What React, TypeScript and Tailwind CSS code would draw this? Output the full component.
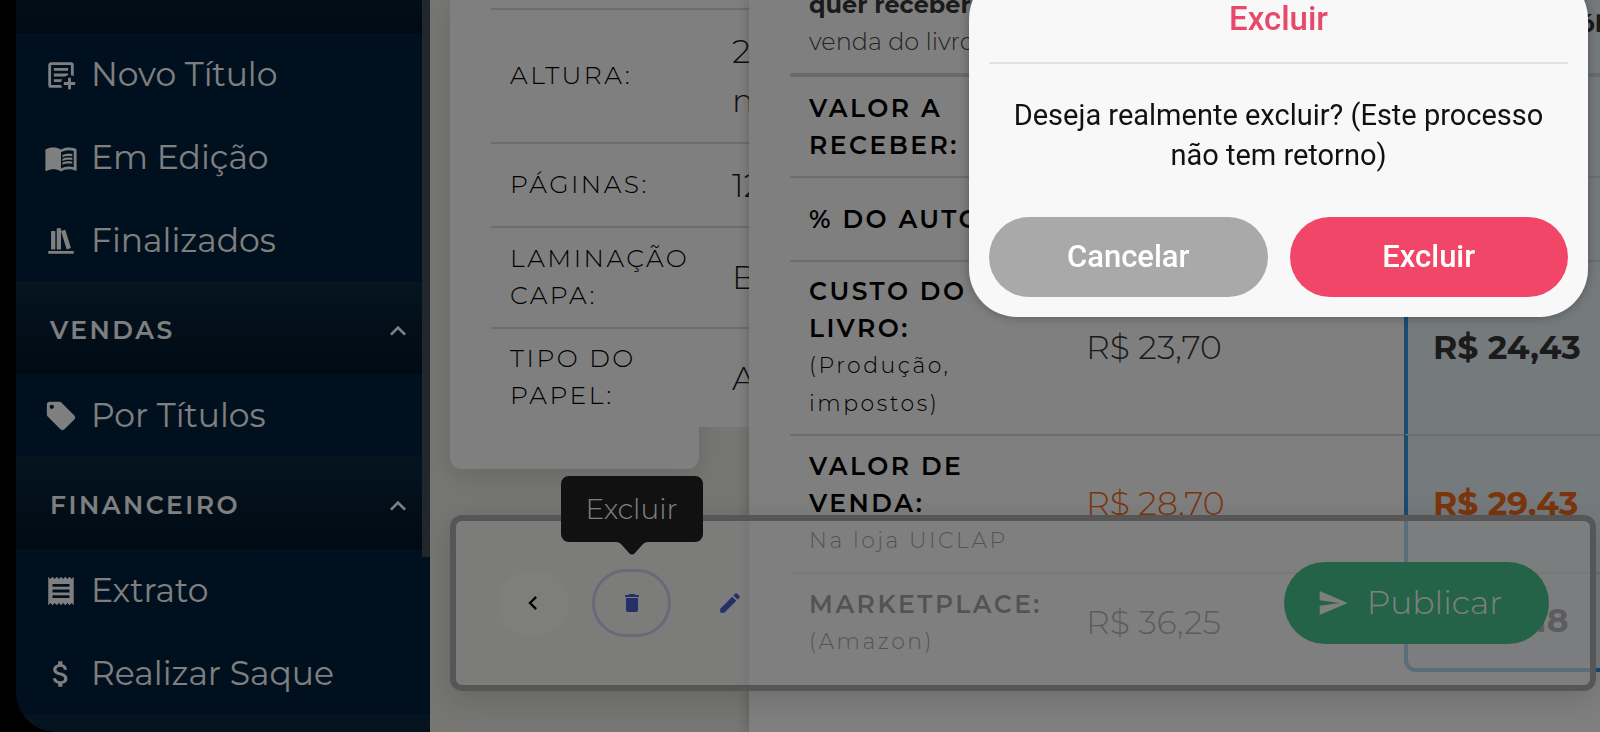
import type { ReactNode } from "react";
import {
  MdAttachMoney,
  MdChevronLeft,
  MdDelete,
  MdEdit,
  MdExpandLess,
  MdLocalOffer,
  MdMenuBook,
  MdReceipt,
  MdSend,
} from "react-icons/md";

function NoteAddIcon() {
  return (
    <svg viewBox="0 0 24 24" className="size-[34px]" fill="currentColor" aria-hidden="true">
      <path d="M17 14h2v3h3v2h-3v3h-2v-3h-3v-2h3v-3M5 3h14a2 2 0 0 1 2 2v7.8a6 6 0 0 0-2-.7V5H5v14h7.1c.1.7.4 1.4.7 2H5a2 2 0 0 1-2-2V5c0-1.1.9-2 2-2m2 4h10v2H7V7m0 4h10v1.1c-.7.1-1.4.4-2 .7V13H7v-2m0 4h5.8c-.3.6-.6 1.3-.7 2H7v-2z" />
    </svg>
  );
}

function BookshelfIcon() {
  return (
    <svg viewBox="0 0 24 24" className="size-[34px]" fill="currentColor" aria-hidden="true">
      <path d="M9 3v15h3V3H9m3 2 4 13 3-1L15 4l-3 1M5 5v13h3V5H5M3 19v2h18v-2H3z" />
    </svg>
  );
}

function MenuHeader({ children }: { children?: ReactNode }) {
  return (
    <button
      type="button"
      className="flex h-[92px] w-full shrink-0 items-center justify-between border-t border-[#142a3e] bg-linear-to-b from-[#0d2940] to-[#001528] pl-[34px] pr-4 pt-[5px] text-left text-[25px] font-semibold tracking-widest text-white"
    >
      <span>{children}</span>
      <MdExpandLess className="size-8" aria-hidden="true" />
    </button>
  );
}

function MenuItem({ icon, children }: { icon: ReactNode; children: ReactNode }) {
  return (
    <a href="#" className="flex h-[83px] shrink-0 items-center gap-[13px] pl-7 text-[33px] font-normal text-white">
      <span className="flex w-[34px] justify-center">{icon}</span>
      <span>{children}</span>
    </a>
  );
}

function Sidebar() {
  return (
    <aside className="w-[430px] shrink-0 pl-4">
      <div className="relative h-full overflow-hidden rounded-bl-[40px] bg-[#00213c]">
        <nav className="-mt-[59px] flex flex-col">
          <MenuHeader />
          <MenuItem icon={<NoteAddIcon />}>Novo Título</MenuItem>
          <MenuItem icon={<MdMenuBook className="size-[34px]" />}>Em Edição</MenuItem>
          <MenuItem icon={<BookshelfIcon />}>Finalizados</MenuItem>
          <MenuHeader>VENDAS</MenuHeader>
          <MenuItem icon={<MdLocalOffer className="size-[34px]" />}>Por Títulos</MenuItem>
          <MenuHeader>FINANCEIRO</MenuHeader>
          <MenuItem icon={<MdReceipt className="size-[34px]" />}>Extrato</MenuItem>
          <MenuItem icon={<MdAttachMoney className="size-[34px]" />}>Realizar Saque</MenuItem>
          <MenuHeader />
        </nav>
        <div className="absolute right-0 top-0 h-[557px] w-2 bg-[#444e5a]" />
      </div>
    </aside>
  );
}

function SpecRow({ label, value, height }: { label: string; value: ReactNode; height: string }) {
  return (
    <tr className={height}>
      <th
        scope="row"
        className="w-[222px] border-t-2 border-[#dbdbdb] pb-[2px] pl-[19px] text-left text-[25px] leading-[37px] font-light tracking-widest text-black"
      >
        {label}
      </th>
      <td className="w-[110px] border-t-2 border-[#dbdbdb] px-[19px] text-[33px] leading-[49px] font-light text-[#1b1b1b]">{value}</td>
    </tr>
  );
}

function SpecCard() {
  return (
    <section className="w-[319px] shrink-0 overflow-hidden pl-5">
      <div className="h-[469px] w-[249px] rounded-b-xl bg-white pl-[41px] shadow-[0_8px_24px_rgba(0,0,0,0.12)]">
        <div className="w-[332px] bg-white pt-2">
          <table className="w-full table-fixed border-separate border-spacing-0">
            <tbody>
              <SpecRow label="ALTURA:" value="210 mm" height="h-[134px]" />
              <SpecRow label="PÁGINAS:" value="120" height="h-[84px]" />
              <SpecRow label="LAMINAÇÃO CAPA:" value="Brilho" height="h-[101px]" />
              <SpecRow label="TIPO DO PAPEL:" value="Avena" height="h-[100px]" />
            </tbody>
          </table>
        </div>
      </div>
    </section>
  );
}

function PriceRow({
  label,
  note,
  price,
  best,
  height,
  orange = false,
  first = false,
  last = false,
}: {
  label: string;
  note?: string;
  price?: string;
  best?: string;
  height: string;
  orange?: boolean;
  first?: boolean;
  last?: boolean;
}) {
  const line = first ? "border-t-4 border-t-[#d5d5d5]" : "border-t-2 border-t-[#dbdbdb]";
  const color = orange ? "text-[#f66b1b]" : "text-[#363636]";
  return (
    <tr className={height}>
      <th scope="row" className={`${line} pl-[19px] text-left text-[25px] leading-[37px] font-semibold tracking-widest text-black`}>
        <span className="block pr-5">{label}</span>
        {note && <span className="block text-[22px] leading-[38px] font-light">{note}</span>}
      </th>
      <td className={`${line} ${color} pl-[18px] text-[33px] font-light`}>{price}</td>
      <td
        className={`${line} ${color} border-l-4 border-l-[#3298dc] bg-[#eaf4fb] pl-[25px] text-[33px] font-bold ${last ? "rounded-bl-xl border-b-4 border-b-[#3298dc]" : ""}`}
      >
        {best}
      </td>
    </tr>
  );
}

function PricePanel() {
  return (
    <section className="relative min-w-0 flex-1 overflow-hidden bg-white pl-[41px] shadow-[0_0_12px_rgba(0,0,0,0.25)]">
      <table className="-mt-10 w-[900px] table-fixed border-separate border-spacing-0">
        <colgroup>
          <col className="w-[278px]" />
          <col className="w-[336px]" />
          <col />
        </colgroup>
        <thead>
          <tr className="h-[113px]">
            <th scope="col" className="pb-[13px] pl-[19px] text-left align-bottom text-2xl leading-[37px] font-light text-[#4a4a4a]">
              <strong className="block whitespace-nowrap font-bold text-[#363636]">quer receber</strong>
              <span className="block whitespace-nowrap">venda do livro</span>
            </th>
            <th scope="col" />
            <th scope="col" className="border-l-4 border-[#3298dc] bg-[#eaf4fb] pl-[156px] pt-[14px] text-left text-2xl font-bold text-[#363636]">
              Sólido
            </th>
          </tr>
        </thead>
        <tbody>
          <PriceRow label="VALOR A RECEBER:" height="h-[103px]" first />
          <PriceRow label="% DO AUTOR:" height="h-[84px]" />
          <PriceRow label="CUSTO DO LIVRO:" note="(Produção, impostos)" price="R$ 23,70" best="R$ 24,43" height="h-[174px]" />
          <PriceRow label="VALOR DE VENDA:" note="Na loja UICLAP" price="R$ 28,70" best="R$ 29,43" height="h-[138px]" orange />
          <PriceRow label="MARKETPLACE:" note="(Amazon)" price="R$ 36,25" best="R$ 37,18" height="h-[100px]" last />
        </tbody>
      </table>
    </section>
  );
}

function ActionBar() {
  return (
    <div className="absolute bottom-[41px] left-5 right-1 flex h-[176px] items-center justify-between rounded-xl border-6 border-[#acacac] bg-white/65 px-[41px] shadow-[0_8px_32px_rgba(0,0,0,0.15)]">
      <div className="flex items-center gap-[23px]">
        <button type="button" aria-label="Voltar" className="flex h-16 w-[72px] items-center justify-center rounded-full bg-white/50 text-black">
          <MdChevronLeft className="size-7" />
        </button>
        <div className="relative">
          <button type="button" aria-label="Excluir" className="flex h-[68px] w-[79px] items-center justify-center rounded-full border-3 border-[#d3d2f2] text-[#4a5fd0]">
            <MdDelete className="size-6" />
          </button>
          <div role="tooltip" className="absolute bottom-[95px] left-1/2 flex h-[66px] w-[142px] -translate-x-1/2 items-center justify-center rounded-lg bg-[#222222] text-[28px] font-light text-white">
            Excluir
            <svg viewBox="0 0 32 13" className="absolute left-1/2 top-full h-[13px] w-8 -translate-x-1/2" fill="#222222" aria-hidden="true">
              <path d="M0 0h32q-3 0-5 2l-8 9q-3 3-6 0L5 2Q3 0 0 0z" />
            </svg>
          </div>
        </div>
        <button type="button" aria-label="Editar" className="flex h-[68px] w-[72px] items-center justify-center text-[#4a5fd0]">
          <MdEdit className="size-[26px]" />
        </button>
      </div>
      <button type="button" className="flex h-[82px] w-[265px] items-center justify-center gap-[18px] rounded-full bg-[#48c78e] pr-[14px] text-[33px] font-light text-white">
        <MdSend className="size-8" aria-hidden="true" />
        Publicar
      </button>
    </div>
  );
}

function ConfirmDialog() {
  return (
    <div className="fixed inset-0 flex items-start justify-end bg-black/50 pr-3">
      <div
        role="dialog"
        aria-modal="true"
        aria-labelledby="dialog-title"
        className="-mt-[29px] w-[619px] rounded-[48px] bg-[#f8f8f8] p-5 text-center font-[Roboto,sans-serif] shadow-[0_0_12px_rgba(0,0,0,0.3)]"
      >
        <h2 id="dialog-title" className="border-b-2 border-[#e2e2e2] pb-[23px] pt-2 text-[33px] leading-10 font-medium text-[#e8496b]">
          Excluir
        </h2>
        <p className="px-5 pb-[42px] pt-[31px] text-[29px] leading-10 text-[#111111]">Deseja realmente excluir? (Este processo não tem retorno)</p>
        <div className="grid grid-cols-2 gap-[22px] text-[31px] font-medium text-white">
          <button type="button" className="h-20 rounded-full bg-[#a9a9a9]">
            Cancelar
          </button>
          <button type="button" className="h-20 rounded-full bg-[#f14668]">
            Excluir
          </button>
        </div>
      </div>
    </div>
  );
}

export default function App() {
  return (
    <div className="flex h-screen overflow-hidden bg-black font-[Montserrat,Inter,sans-serif]">
      <Sidebar />
      <main className="relative flex min-w-0 flex-1 bg-[#edece7]">
        <SpecCard />
        <PricePanel />
        <ActionBar />
      </main>
      <ConfirmDialog />
    </div>
  );
}
